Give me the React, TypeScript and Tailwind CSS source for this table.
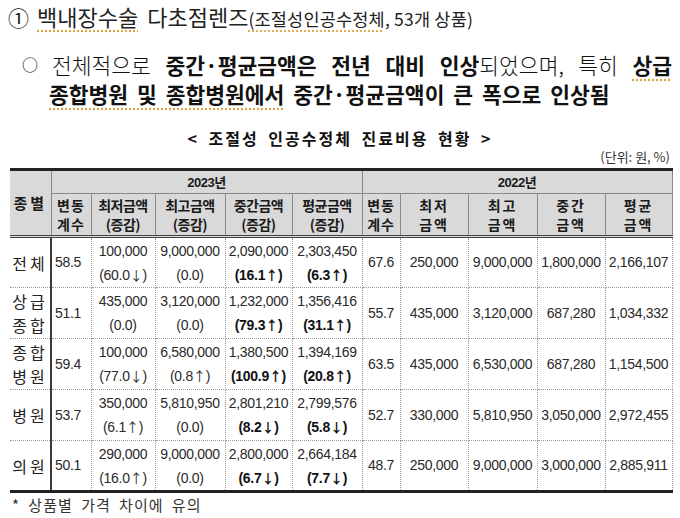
import React from "react";

type Row = {
  label: string[];
  cv: string;
  vals: [string, string][];
  prev: string[];
};

const rows: Row[] = [
  {
    label: ["전체"],
    cv: "58.5",
    vals: [
      ["100,000", "(60.0↓)"],
      ["9,000,000", "(0.0)"],
      ["2,090,000", "(16.1↑)"],
      ["2,303,450", "(6.3↑)"],
    ],
    prev: ["67.6", "250,000", "9,000,000", "1,800,000", "2,166,107"],
  },
  {
    label: ["상급", "종합"],
    cv: "51.1",
    vals: [
      ["435,000", "(0.0)"],
      ["3,120,000", "(0.0)"],
      ["1,232,000", "(79.3↑)"],
      ["1,356,416", "(31.1↑)"],
    ],
    prev: ["55.7", "435,000", "3,120,000", "687,280", "1,034,332"],
  },
  {
    label: ["종합", "병원"],
    cv: "59.4",
    vals: [
      ["100,000", "(77.0↓)"],
      ["6,580,000", "(0.8↑)"],
      ["1,380,500", "(100.9↑)"],
      ["1,394,169", "(20.8↑)"],
    ],
    prev: ["63.5", "435,000", "6,530,000", "687,280", "1,154,500"],
  },
  {
    label: ["병원"],
    cv: "53.7",
    vals: [
      ["350,000", "(6.1↑)"],
      ["5,810,950", "(0.0)"],
      ["2,801,210", "(8.2↓)"],
      ["2,799,576", "(5.8↓)"],
    ],
    prev: ["52.7", "330,000", "5,810,950", "3,050,000", "2,972,455"],
  },
  {
    label: ["의원"],
    cv: "50.1",
    vals: [
      ["290,000", "(16.0↑)"],
      ["9,000,000", "(0.0)"],
      ["2,800,000", "(6.7↓)"],
      ["2,664,184", "(7.7↓)"],
    ],
    prev: ["48.7", "250,000", "9,000,000", "3,000,000", "2,885,911"],
  },
];

const colWidths = [41, 40, 64, 70, 67, 70, 38, 68, 69, 68, 67];

const head2023 = ["최저금액", "최고금액", "중간금액", "평균금액"];
const head2022 = [
  ["최저", "금액"],
  ["최고", "금액"],
  ["중간", "금액"],
  ["평균", "금액"],
];

const th =
  "bg-[#d9d9d9] border border-solid border-[#8a8a8a] font-bold text-[#1a1a1a] text-center align-middle p-0";
const th2 = th + " [border-bottom-width:3px] [border-bottom-style:double] [border-bottom-color:#444]";
const td = "border border-dotted border-[#9a9a9a] text-center align-middle p-0 text-[#2a2a2a]";

// splits "(60.0↓)" so the arrow gets the wider CJK glyph
function Change({ text }: { text: string }) {
  const m = text.match(/^(.*?)([↑↓])(\))$/);
  if (!m) return <>{text}</>;
  return (
    <>
      {m[1]}
      <span className="font-['Noto_Sans_CJK_KR',sans-serif] text-[13px]">{m[2]}</span>
      {m[3]}
    </>
  );
}

export default function App() {
  return (
    <div className="w-[680px] h-[518px] overflow-hidden bg-white text-[#1c1c1c] font-['Liberation_Sans','Noto_Sans_CJK_KR',sans-serif]">
      {/* heading */}
      <div className="h-[32px] pt-[3px] pl-[8px] flex items-baseline text-[22px] leading-[26px] font-['Noto_Sans_CJK_KR',sans-serif] text-[#222]">
        <span className="mr-[8px] text-[21px]">①</span>
        <span className="underline decoration-dotted decoration-[#d9a441] underline-offset-[4px]">백내장수술</span>
        <span className="ml-[9px]">다초점렌즈</span>
        <span className="text-[17.5px] tracking-[0.2px]">
          <span className="underline decoration-dotted decoration-[#d9a441] underline-offset-[5px]">
            (조절성인공수정체
          </span>
          , 53개 상품)
        </span>
      </div>

      {/* bullet */}
      <div className="mt-[18px] flex text-[21.5px] leading-[29px] font-['Noto_Sans_CJK_KR',sans-serif] text-[#111]">
        <span className="w-[52px] pl-[22px] text-[16px]">○</span>
        <div className="w-[620px]">
          <div className="text-justify [text-align-last:justify]">
            <span className="font-light">전체적으로 </span>
            <span className="font-bold">중간·평균금액은 전년 대비 인상</span>
            <span className="font-light">되었으며, 특히 </span>
            <span className="font-bold underline decoration-dotted decoration-[#d9a441] underline-offset-[5px]">상급</span>
          </div>
          <div className="ml-[-3px] font-bold whitespace-nowrap [word-spacing:4px]">
            <span className="underline decoration-dotted decoration-[#d9a441] underline-offset-[5px]">
              종합병원 및 종합병원에서
            </span>{" "}
            중간·평균금액이 큰 폭으로 인상됨
          </div>
        </div>
      </div>

      {/* table title */}
      <div className="mt-[20px] text-center text-[16px] leading-[20px] font-bold tracking-[2px] [word-spacing:4px] font-['Noto_Sans_CJK_KR',sans-serif] text-[#111]">
        &lt; 조절성 인공수정체 진료비용 현황 &gt;
      </div>

      <div className="pr-[10px] text-right text-[13px] leading-[18px] text-[#333] font-['Noto_Sans_CJK_KR',sans-serif]">
        (단위: 원, %)
      </div>

      <table className="mt-[2px] ml-[10px] w-[662px] table-fixed border-collapse">
        <colgroup>
          {colWidths.map((w, i) => (
            <col key={i} style={{ width: w }} />
          ))}
        </colgroup>
        <thead>
          <tr className="h-[24px]">
            <th
              rowSpan={2}
              className={th2 + " border-l-0 border-t-[3px] border-t-[#222] text-[15px] tracking-[3px] font-['Noto_Sans_CJK_KR',sans-serif]"}
            >
              종별
            </th>
            <th colSpan={5} className={th + " border-t-[3px] border-t-[#222] text-[13px] font-semibold tracking-[-0.5px] pt-[2px]"}>
              2023년
            </th>
            <th colSpan={5} className={th + " border-t-[3px] border-t-[#222] text-[13px] font-semibold tracking-[-0.5px] pt-[2px]"}>
              2022년
            </th>
          </tr>
          <tr className="h-[43px]">
            <th className={th2 + " text-[14px] leading-[19px] tracking-[1px] font-['Noto_Sans_CJK_KR',sans-serif]"}>
              <div>변동</div>
              <div>계수</div>
            </th>
            {head2023.map((h) => (
              <th key={h} className={th2 + " text-[14px] leading-[19px] tracking-[-0.5px] font-['Noto_Sans_CJK_KR',sans-serif]"}>
                <div>{h}</div>
                <div className="font-semibold">(증감)</div>
              </th>
            ))}
            <th className={th2 + " text-[14px] leading-[19px] tracking-[1px] font-['Noto_Sans_CJK_KR',sans-serif]"}>
              <div>변동</div>
              <div>계수</div>
            </th>
            {head2022.map((h) => (
              <th key={h[0]} className={th2 + " text-[14px] leading-[19px] tracking-[2px] font-['Noto_Sans_CJK_KR',sans-serif]"}>
                <div>{h[0]}</div>
                <div className="font-semibold">{h[1]}</div>
              </th>
            ))}
          </tr>
        </thead>
        <tbody className="text-[14px] tracking-[-0.3px]">
          {rows.map((r, ri) => {
            const last = ri === rows.length - 1;
            const bottom = last ? " border-b-[3px] border-b-[#222] [border-bottom-style:solid]" : "";
            return (
              <tr key={ri} className="h-[51px]">
                <td
                  className={
                    td +
                    bottom +
                    " border-l-0 [border-right-style:solid] border-r-2 border-r-[#3a3a3a] text-[16px] leading-[24px] tracking-[3px] text-[#222] font-['Noto_Sans_CJK_KR',sans-serif]"
                  }
                >
                  {r.label.map((l) => (
                    <div key={l}>{l}</div>
                  ))}
                </td>
                <td className={td + bottom + " text-left pl-[3px]"}>{r.cv}</td>
                {r.vals.map((v, vi) => (
                  <td key={vi} className={td + bottom + " leading-[24px]"}>
                    <div>{v[0]}</div>
                    <div className={vi >= 2 ? "font-bold text-[#111]" : ""}>
                      <Change text={v[1]} />
                    </div>
                  </td>
                ))}
                {r.prev.map((p, pi) => (
                  <td key={pi} className={td + bottom}>
                    {p}
                  </td>
                ))}
              </tr>
            );
          })}
        </tbody>
      </table>

      <div className="mt-[2px] pl-[12px] text-[15px] leading-[20px] tracking-[1px] [word-spacing:4px] text-[#333] font-['Noto_Sans_CJK_KR',sans-serif]">
        * 상품별 가격 차이에 유의
      </div>
    </div>
  );
}
